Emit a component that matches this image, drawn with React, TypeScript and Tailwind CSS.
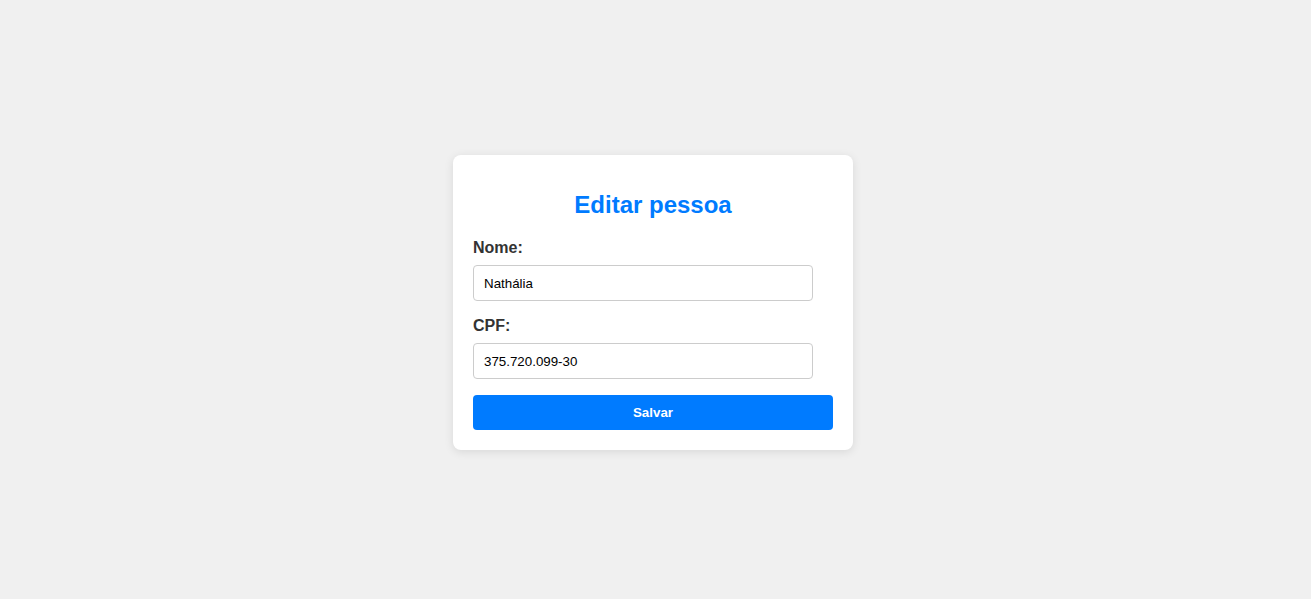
import { useState } from 'react';

function App() {
  const [nome, setNome] = useState('Nathália');
  const [cpf, setCpf] = useState('375.720.099-30');

  return (
    <div className="min-h-screen bg-[#f0f0f0] flex items-center justify-center pr-[5px] pt-[6px] font-['Liberation_Sans',Arial,sans-serif]">
      <div className="w-[400px] bg-white rounded-lg p-5 shadow-[0_2px_10px_rgba(0,0,0,0.1)]">
        <h2 className="mt-[15px] mb-5 text-center text-[24px] leading-[29px] font-bold text-[#007bff]">
          Editar pessoa
        </h2>

        <form onSubmit={e => e.preventDefault()}>
          <label className="block mb-2 text-[16px] leading-[18px] font-bold text-[#333]">Nome:</label>
          <input
            type="text"
            value={nome}
            onChange={e => setNome(e.target.value)}
            className="block w-[340px] h-[36px] px-[10px] border border-[#ccc] rounded text-[13.33px] text-black outline-none"
          />

          <label className="block mt-4 mb-2 text-[16px] leading-[18px] font-bold text-[#333]">CPF:</label>
          <input
            type="text"
            value={cpf}
            onChange={e => setCpf(e.target.value)}
            className="block w-[340px] h-[36px] px-[10px] border border-[#ccc] rounded text-[13.33px] text-black outline-none"
          />

          <button
            type="submit"
            className="block w-full h-[35px] mt-4 bg-[#007bff] text-white text-[13.33px] font-bold rounded"
          >
            Salvar
          </button>
        </form>
      </div>
    </div>
  );
}

export default App;
